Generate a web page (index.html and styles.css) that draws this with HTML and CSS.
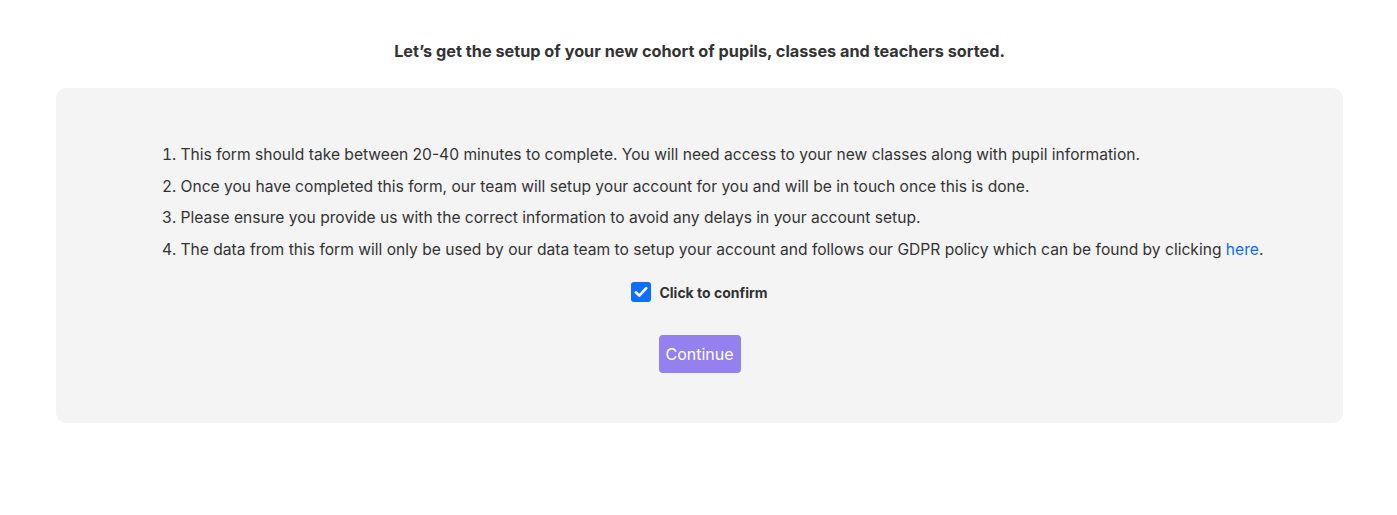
FILE: index.html
```html
<!DOCTYPE html>
<html>
<head>
<meta charset="utf-8">
<link rel="stylesheet" href="styles.css">
</head>
<body>
<div class="page">
  <h1 class="title">Let’s get the setup of your new cohort of pupils, classes and teachers sorted.</h1>
  <div class="card">
    <ol class="steps">
      <li>This form should take between 20-40 minutes to complete. You will need access to your new classes along with pupil information.</li>
      <li>Once you have completed this form, our team will setup your account for you and will be in touch once this is done.</li>
      <li>Please ensure you provide us with the correct information to avoid any delays in your account setup.</li>
      <li>The data from this form will only be used by our data team to setup your account and follows our GDPR policy which can be found by clicking <a href="#" class="link">here</a>.</li>
    </ol>
    <label class="confirm">
      <span class="box"><svg width="14" height="12" viewBox="0 0 14 12"><path d="M1.8 6.3 L5.3 9.6 L12.2 2.2" fill="none" stroke="#fff" stroke-width="2.6" stroke-linecap="round" stroke-linejoin="round"/></svg></span>
      <span class="confirm-text">Click to confirm</span>
    </label>
    <div class="actions">
      <button class="btn">Continue</button>
    </div>
  </div>
</div>
</body>
</html>
```
FILE: styles.css
```css
* { box-sizing: border-box; }
body {
  margin: 0;
  background: #fff;
  font-family: "Inter", "Noto Sans", sans-serif;
  color: #333;
}
.page {
  padding: 41px 54px 0 56px;
}
.title {
  margin: 0 0 27px 0;
  text-align: center;
  font-size: 16.25px;
  font-weight: 700;
  line-height: 20px;
  color: #333;
}
.card {
  background: #f4f4f4;
  border-radius: 10px;
  height: 335px;
  padding: 51px 0 0 0;
}
.steps {
  margin: 0;
  padding: 0 0 0 106px;
  list-style-position: inside;
  font-size: 15.6px;
  line-height: 31.6px;
  color: #333;
}
.link { color: #0d6efd; text-decoration: none; }
.confirm {
  display: flex;
  justify-content: center;
  align-items: center;
  gap: 8px;
  margin-top: 17px;
}
.box {
  width: 20px;
  height: 20px;
  background: #0d6efd;
  border-radius: 3px;
  display: flex;
  align-items: center;
  justify-content: center;
}
.confirm-text {
  font-size: 14px;
  font-weight: 700;
  color: #333;
}
.actions {
  display: flex;
  justify-content: center;
  margin-top: 33px;
}
.btn {
  width: 82px;
  height: 38px;
  border: none;
  border-radius: 4px;
  background: #9580f0;
  color: #fff;
  font-family: inherit;
  font-size: 16px;
}
```
